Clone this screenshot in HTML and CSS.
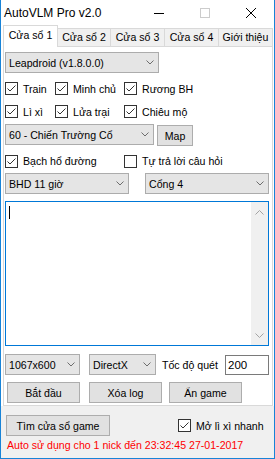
FILE: index.html
```html
<!DOCTYPE html>
<html lang="vi">
  <head>
    <meta charset="UTF-8" />
    <title>AutoVLM Pro v2.0</title>
    <link rel="stylesheet" href="styles.css">
  </head>
  <body>
    <div class="window">
      <div class="titlebar">
        <span class="title">AutoVLM Pro v2.0</span>
        <span class="winbtn">
          <svg width="10" height="10"><line x1="0" y1="5.5" x2="10" y2="5.5" stroke="#000"></line></svg>
        </span>
        <span class="winbtn">
          <svg width="10" height="10"><rect x="0.5" y="0.5" width="9" height="9" fill="none" stroke="#ccc"></rect></svg>
        </span>
        <span class="winbtn">
          <svg width="10" height="10"><path d="M0 0 L10 10 M10 0 L0 10" stroke="#000" fill="none"></path></svg>
        </span>
      </div>

      <div class="tabs">
        <div class="tab active">Cửa sổ 1</div>
        <div class="tab t2">Cửa sổ 2</div>
        <div class="tab t3">Cửa sổ 3</div>
        <div class="tab t4">Cửa sổ 4</div>
        <div class="tab t5">Giới thiệu</div>
      </div>

      <div class="panel">
        <div class="combo combo-device">
          Leapdroid (v1.8.0.0)
          <svg class="arrow" width="8" height="5"><path d="M0.5 0.5 L4 4 L7.5 0.5" stroke="#6d6d6d" fill="none"></path></svg>
        </div>

        <div class="checks">
          <label class="chk"><span class="box"><svg width="11" height="11"><polyline points="1.5,5.5 4,8 9.5,2.5" stroke="#333" fill="none"></polyline></svg></span>Train</label>
          <label class="chk"><span class="box"><svg width="11" height="11"><polyline points="1.5,5.5 4,8 9.5,2.5" stroke="#333" fill="none"></polyline></svg></span>Minh chủ</label>
          <label class="chk"><span class="box"><svg width="11" height="11"><polyline points="1.5,5.5 4,8 9.5,2.5" stroke="#333" fill="none"></polyline></svg></span>Rương BH</label>
          <label class="chk"><span class="box"><svg width="11" height="11"><polyline points="1.5,5.5 4,8 9.5,2.5" stroke="#333" fill="none"></polyline></svg></span>Lì xì</label>
          <label class="chk"><span class="box"><svg width="11" height="11"><polyline points="1.5,5.5 4,8 9.5,2.5" stroke="#333" fill="none"></polyline></svg></span>Lửa trại</label>
          <label class="chk"><span class="box"><svg width="11" height="11"><polyline points="1.5,5.5 4,8 9.5,2.5" stroke="#333" fill="none"></polyline></svg></span>Chiêu mộ</label>
        </div>

        <div class="row row-map">
          <div class="combo combo-map">
            60 - Chiến Trường Cổ
            <svg class="arrow" width="8" height="5"><path d="M0.5 0.5 L4 4 L7.5 0.5" stroke="#6d6d6d" fill="none"></path></svg>
          </div>
          <div class="btn btn-map">Map</div>
        </div>

        <div class="checks checks-bhd">
          <label class="chk"><span class="box"><svg width="11" height="11"><polyline points="1.5,5.5 4,8 9.5,2.5" stroke="#333" fill="none"></polyline></svg></span>Bạch hổ đường</label>
          <label class="chk"><span class="box"></span>Tự trả lời câu hỏi</label>
        </div>

        <div class="row row-bhd">
          <div class="combo combo-half">
            BHD 11 giờ
            <svg class="arrow" width="8" height="5"><path d="M0.5 0.5 L4 4 L7.5 0.5" stroke="#6d6d6d" fill="none"></path></svg>
          </div>
          <div class="combo combo-half combo-gate">
            Cổng 4
            <svg class="arrow" width="8" height="5"><path d="M0.5 0.5 L4 4 L7.5 0.5" stroke="#6d6d6d" fill="none"></path></svg>
          </div>
        </div>

        <div class="log">
          <span class="caret"></span>
          <div class="scrollbar">
            <svg width="9" height="5"><path d="M0.5 4.5 L4.5 0.5 L8.5 4.5" stroke="#a3a3a3" fill="none"></path></svg>
            <svg width="9" height="5"><path d="M0.5 0.5 L4.5 4.5 L8.5 0.5" stroke="#a3a3a3" fill="none"></path></svg>
          </div>
        </div>

        <div class="row row-opts">
          <div class="combo combo-res">
            1067x600
            <svg class="arrow" width="8" height="5"><path d="M0.5 0.5 L4 4 L7.5 0.5" stroke="#6d6d6d" fill="none"></path></svg>
          </div>
          <div class="combo combo-dx">
            DirectX
            <svg class="arrow" width="8" height="5"><path d="M0.5 0.5 L4 4 L7.5 0.5" stroke="#6d6d6d" fill="none"></path></svg>
          </div>
          <span class="lbl-speed">Tốc độ quét</span>
          <div class="speed">200</div>
        </div>

        <div class="row row-actions">
          <div class="btn btn-act">Bắt đầu</div>
          <div class="btn btn-act btn-clear">Xóa log</div>
          <div class="btn btn-act btn-hide">Ẩn game</div>
        </div>
      </div>

      <div class="footer">
        <div class="footer-row">
          <div class="btn btn-find">Tìm cửa sổ game</div>
          <label class="chk chk-fast"><span class="box"><svg width="11" height="11"><polyline points="1.5,5.5 4,8 9.5,2.5" stroke="#333" fill="none"></polyline></svg></span>Mở lì xì nhanh</label>
        </div>
        <div class="expiry">Auto sử dụng cho 1 nick đến 23:32:45 27-01-2017</div>
      </div>
    </div>
  </body>
</html>
```

FILE: styles.css
```css
html,
body {
  margin: 0;
  background: #fff;
  font-family: "Liberation Sans", Arial, sans-serif;
  font-size: 10.6px;
  color: #000;
}

.window {
  width: 275px;
  height: 459px;
  box-sizing: border-box;
  border: 1px solid #1883d7;
  border-top: 0;
  background: #fff;
  display: flex;
  flex-direction: column;
}

/* title bar */
.titlebar {
  height: 25px;
  display: flex;
  align-items: center;
}
.title {
  flex: 1;
  padding-left: 3px;
  font-size: 12px;
}
.winbtn {
  width: 46px;
  height: 25px;
  display: flex;
  align-items: center;
  justify-content: center;
}

/* tabs */
.tabs {
  height: 21px;
  padding-left: 2px;
  display: flex;
  align-items: flex-end;
  position: relative;
  z-index: 1;
}
.tab {
  height: 18px;
  box-sizing: border-box;
  border: 1px solid #d9d9d9;
  border-bottom: 0;
  border-right: 0;
  background: #f0f0f0;
  line-height: 17px;
  text-align: center;
}
.tab.active {
  width: 55px;
  height: 22px;
  margin-bottom: -1px;
  border-right: 1px solid #d9d9d9;
  background: #fff;
  line-height: 19px;
}
.tab.t2 {
  width: 52px;
  border-left: 0;
}
.tab.t3 {
  width: 54px;
}
.tab.t4 {
  width: 54px;
}
.tab.t5 {
  width: 55px;
  border-right: 1px solid #d9d9d9;
}

/* tab page */
.panel {
  margin-left: 2px;
  width: 270px;
  box-sizing: border-box;
  border: 1px solid #d9d9d9;
  background: #fff;
  padding: 5px 0 2px 1px;
}

.row {
  display: flex;
}

.combo {
  height: 21px;
  box-sizing: border-box;
  border: 1px solid #acacac;
  background: #e5e5e5;
  padding-left: 3px;
  display: flex;
  align-items: center;
  white-space: nowrap;
}
.combo .arrow {
  margin-left: auto;
  margin-right: 4px;
}
.combo-device {
  width: 154px;
}

.btn {
  height: 21px;
  box-sizing: border-box;
  border: 1px solid #adadad;
  background: #e1e1e1;
  display: flex;
  align-items: center;
  justify-content: center;
  white-space: nowrap;
}

.checks {
  margin-top: 4px;
  display: grid;
  grid-template-columns: 50px 69px auto;
  grid-auto-rows: 23px;
}
.chk {
  display: flex;
  align-items: center;
  gap: 5px;
  white-space: nowrap;
}
.box {
  width: 13px;
  height: 13px;
  box-sizing: border-box;
  border: 1px solid #333;
  background: #fff;
  display: flex;
}

.row-map {
  margin-top: 1px;
}
.combo-map {
  width: 149px;
}
.btn-map {
  width: 36px;
  margin: 1px 0 0 3px;
}

.checks-bhd {
  grid-template-columns: 119px auto;
  grid-auto-rows: 22px;
}

.row-bhd {
  margin-top: 1px;
}
.combo-half {
  width: 124px;
}
.combo-gate {
  margin-left: 16px;
}

/* log box */
.log {
  margin-top: 7px;
  width: 264px;
  height: 145px;
  box-sizing: border-box;
  border: 1px solid #0078d7;
  display: flex;
  justify-content: space-between;
}
.caret {
  width: 1px;
  height: 13px;
  margin: 4px 0 0 3px;
  background: #000;
}
.scrollbar {
  width: 17px;
  padding: 8px 0 7px;
  box-sizing: border-box;
  background: #f0f0f0;
  display: flex;
  flex-direction: column;
  align-items: center;
  justify-content: space-between;
}

.row-opts {
  margin-top: 8px;
  width: 264px;
  align-items: center;
}
.combo-res {
  width: 75px;
}
.combo-dx {
  width: 67px;
  margin-left: 9px;
}
.lbl-speed {
  margin-left: 6px;
}
.speed {
  margin-left: auto;
  width: 44px;
  height: 20px;
  box-sizing: border-box;
  border: 1px solid #7a7a7a;
  background: #fff;
  padding-left: 2px;
  font-size: 11.5px;
  line-height: 18px;
}

.row-actions {
  margin-top: 7px;
  padding-left: 2px;
}
.btn-act {
  width: 73px;
}
.btn-clear {
  margin-left: 9px;
}
.btn-hide {
  margin-left: 7px;
}

/* bottom strip */
.footer {
  flex: 1;
  background: #f0f0f0;
  padding: 9px 0 0 5px;
}
.footer-row {
  display: flex;
  align-items: center;
}
.btn-find {
  width: 104px;
}
.chk-fast {
  margin-left: 68px;
}
.expiry {
  margin-top: 2px;
  padding-left: 1px;
  line-height: 14px;
  color: #f00;
  white-space: nowrap;
}
```
